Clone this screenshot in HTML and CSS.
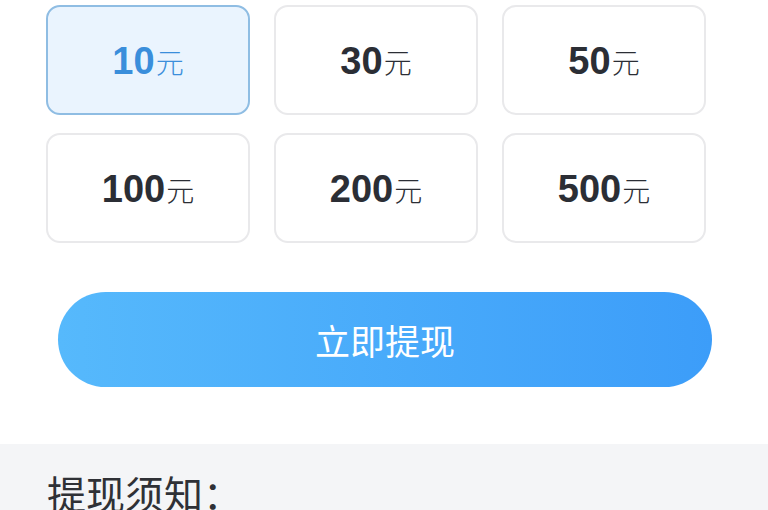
FILE: index.html
```html
<!DOCTYPE html>
<html lang="zh">
<head>
<meta charset="utf-8">
<link rel="stylesheet" href="styles.css">
</head>
<body>
<div class="page">
  <div class="amounts">
    <div class="card selected"><span class="num">10</span><span class="unit">元</span></div>
    <div class="card"><span class="num">30</span><span class="unit">元</span></div>
    <div class="card"><span class="num">50</span><span class="unit">元</span></div>
    <div class="card"><span class="num">100</span><span class="unit">元</span></div>
    <div class="card"><span class="num">200</span><span class="unit">元</span></div>
    <div class="card"><span class="num">500</span><span class="unit">元</span></div>
  </div>
  <div class="action">
    <button class="submit">立即提现</button>
  </div>
  <div class="notice">
    <div class="notice-title">提现须知：</div>
  </div>
</div>
</body>
</html>
```
FILE: styles.css
```css
html, body {
  margin: 0;
  padding: 0;
  background: #ffffff;
  font-family: "Liberation Sans", "Noto Sans CJK SC", sans-serif;
}
.page {
  width: 768px;
  height: 510px;
  overflow: hidden;
  display: flex;
  flex-direction: column;
}
.amounts {
  display: grid;
  grid-template-columns: repeat(3, 204px);
  grid-auto-rows: 110px;
  column-gap: 24px;
  row-gap: 18px;
  padding: 5px 0 0 46px;
}
.card {
  box-sizing: border-box;
  border: 2px solid #e9e9eb;
  border-radius: 14px;
  background: #ffffff;
  display: flex;
  align-items: baseline;
  justify-content: center;
  padding-top: 34px;
  color: #2b2e35;
}
.card.selected {
  background: #eaf4fe;
  border-color: #8fbde3;
  color: #3a8edb;
}
.num {
  font-size: 38px;
  font-weight: bold;
  line-height: 40px;
}
.unit {
  font-size: 28px;
  line-height: 40px;
  margin-left: 1px;
  font-family: "Noto Sans CJK SC", sans-serif;
  font-weight: 300;
}
.action {
  padding: 49px 56px 0 58px;
}
.submit {
  display: block;
  width: 654px;
  height: 95px;
  border: none;
  border-radius: 48px;
  background: linear-gradient(90deg, #56b9fc 0%, #3c9df9 100%);
  color: #ffffff;
  font-family: "Noto Sans CJK SC", sans-serif;
  font-size: 35px;
  padding: 0;
}
.notice {
  margin-top: 57px;
  flex: 1;
  background: #f4f5f7;
  padding: 26px 0 0 47px;
}
.notice-title {
  font-family: "Noto Sans CJK SC", sans-serif;
  font-size: 39px;
  line-height: 44px;
  color: #2f3136;
}
```
